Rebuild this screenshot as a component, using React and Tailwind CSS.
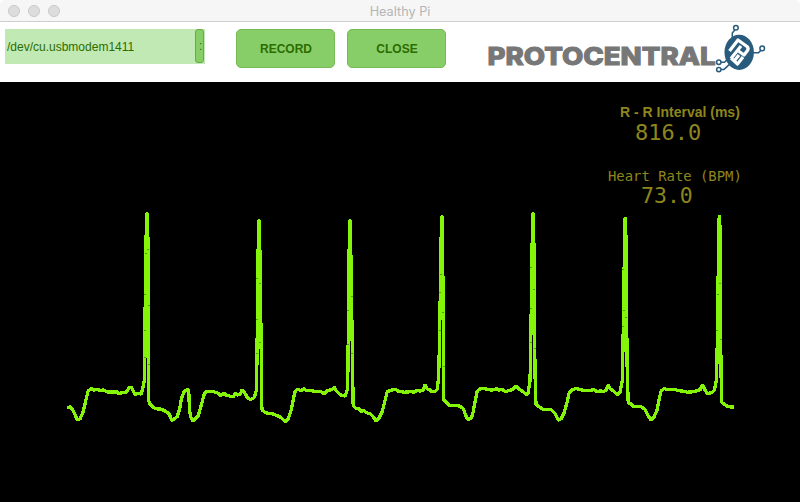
const TRACE = [
  // beat 1
  "67,407 70,406 73,410 77,419 80,418 83,411 85.5,400 88,390 91.5,388 94,389.5 97,388.5 100,390 103,389 107,391.3 117,391.3 119,393.5 122,391.5 125,392 127,390.5 129,386.5 131,386.5 133,390 135,394 138,392.5 141,393.5 142.5,388 144,380 144.6,370 145,300 146.3,212.5 147.2,212.5 148.5,280 148.6,400 150,404 155,408 161,408.5 166,411 169,413 171.5,420 174,418 177,416 179.5,408 181.5,397 184,391 186,389.5 188.5,389 189.3,410 190.5,416 193,420.5 198,415 200,408 202,401 204,393.5 206,390.5",
  // beat 2
  "209,391 213,391 217,392 220,394.5 222,394 224,392 226,394.5 230,395.5 233,396 235,392.5 237,394.5 240,393.5 242,389 244,391 247,396.5 250,399 254,397 256,390 256.6,370 257.5,290 258.3,219.5 259.2,219.5 260.3,290 261.2,370 261.7,409 265,412 272,413 277,415 281,417 285,421 288,418 291,409 293,399 295,390.5 297,388.5 301,389.8 304,388 306,390 311,389.5 314,391 317,391 321,391 324,393.5 326,390.5 328,390 332,388.5 334,386.5 336,390",
  // beat 3
  "340,394 345,395.5 347,389 347.7,370 348.5,290 349.3,219.5 350.1,219.5 351.4,300 352.4,370 353,405 356,408 359,408 361,411 363,409 366,412 370,413 373,416 376,420.5 379,417 382,411 385,399 387,391 391,389.5 395,388.5 398,390.5 404,391.5 411,391 414,391.5 417,389.5 420,390.5 423,389.5 425,383.5 427,388.5 429,388.5 431,391 434,391 437,389 438.5,375",
  // beat 4
  "439.5,330 441.3,215.5 442.1,215.5 443,310 443.5,399 446,401.5 449,404.5 455,404.5 460,405.5 463,408 465,413 467,418.5 471,418 473,411 475,400 477,390.5 480,388 484,388 489,389 492,389.5 496,388 499,389.5 502,388.5 505,391 508,390 512,389 516,385.5 519,388.5 523,391 526,394 528,392 529.8,380",
  // beat 5
  "530.3,360 531.3,290 532.4,212.5 533.2,212.5 534.4,290 534.7,370 535.8,404 539,406 543,409 547,409 551,409 555,413 558,419.5 561,418 564,412 567,401 569,392 572,389 576,387.8 580,389 583,389.5 591,389.5 594,389 597,391 600,390 603,391 606,389.5 608,384 610,388 613,390 617,394 620,391 622,380 622.7,350",
  // beat 6
  "623.6,290 624.7,217.5 625.5,217.5 626.4,310 627,370 628,402 631,403.5 633,406 641,406 645,409 648,415 651,419.5 654,416 657,409 659,398 661,390 664,388 668,389 674,388.5 678,390 683,390.5 687,391.5 694,391 698,389.5 700,389 702.5,384 704,388 707,393 711,392 714,390 716,380 716.8,360",
  // beat 7
  "717.7,290 719,215.5 719.6,215.5 720.3,310 720.8,370 721.5,402 725,404 728,406 734,406.5",
].join(" ");

const SEAMS = [
  [144, 330], [148, 305], [144, 294], [145, 253], [147, 249], [144, 357],
  [148, 364], [256, 278], [259, 283], [256, 319], [259, 342], [256, 353],
  [347, 310], [351, 296], [347, 344], [351, 353], [440, 274], [442, 312],
  [439, 292], [439, 330], [443, 366], [530, 267], [533, 289], [530, 308],
  [530, 342], [534, 348], [622, 269], [623, 310], [625, 317], [622, 326],
  [717, 294], [719, 283], [716, 330], [720, 339],
];

function TitleBar() {
  return (
    <header className="grid h-[22px] grid-cols-[1fr_auto_1fr] items-center border-b border-[#cfcfcf] bg-[#f6f6f6]">
      <div className="flex gap-2 pl-2">
        <span className="size-3 rounded-full border border-[#c8c8c8] bg-[#dddddd]" />
        <span className="size-3 rounded-full border border-[#c8c8c8] bg-[#dddddd]" />
        <span className="size-3 rounded-full border border-[#c8c8c8] bg-[#dddddd]" />
      </div>
      <h1 className="pt-[3px] font-['Inter',sans-serif] text-[12.7px] leading-none text-[#b5b5b5]">Healthy Pi</h1>
      <div />
    </header>
  );
}

function ToolButton({ children }) {
  return (
    <button className="h-[39px] w-[99px] rounded-[5px] border border-[#77b954] bg-[#88ce68] pl-px text-xs font-bold text-[#2c6c00]">
      {children}
    </button>
  );
}

function Logo() {
  return (
    <svg className="h-[60px] w-[290px]" viewBox="480 22 290 60" aria-label="Protocentral">
      <text
        x="487.5"
        y="65.2"
        fill="#777777"
        stroke="#777777"
        strokeWidth="1"
        fontFamily="Inter, sans-serif"
        fontWeight="800"
        fontSize="24"
        textLength="228"
        lengthAdjust="spacingAndGlyphs"
      >
        PROTOCENTRAL
      </text>
      <g fill="none" stroke="#285b7c" strokeWidth="1.5">
        <path d="M732.3 38v-5l2.5-3M753 52.7h5.5l2.3-2.3M721 62.3h3.5l4-4M721 69.4h3l5.5-5" />
        <circle cx="735.9" cy="27.8" r="2.3" />
        <circle cx="762.2" cy="48.4" r="2.3" />
        <circle cx="718.8" cy="62.3" r="2.2" />
        <circle cx="718.8" cy="69.6" r="2.2" />
      </g>
      <ellipse cx="739.2" cy="52.3" rx="14.7" ry="17.6" fill="#285b7c" />
      <g fill="none" stroke="#ffffff" strokeWidth="3.2" strokeLinejoin="round">
        <path d="M729.5 51L738 40L747 46.5Q749 48.5 747.5 50.5L744 55L738.5 51" />
        <path d="M741 46L731 58.5M731 58L737.5 64L743 57M734.5 60.5L739 55" />
      </g>
    </svg>
  );
}

function Toolbar() {
  return (
    <div className="flex h-[60px] items-start bg-white pl-[5px]">
      <div className="mt-[7px] flex h-[35px] w-[200px] bg-[#c1e9b3] text-xs text-[#2c6c00]">
        <span className="flex-1 pl-[2px] leading-[37px]">/dev/cu.usbmodem1411</span>
        <span className="mr-px h-[34px] w-[9px] rounded-[3px] border border-[#68aa48] bg-[#88ce68] pl-[3px] leading-[32px]">:</span>
      </div>
      <div className="mt-[7px] ml-[31px] flex gap-3">
        <ToolButton>RECORD</ToolButton>
        <ToolButton>CLOSE</ToolButton>
      </div>
      <div className="ml-[34px]">
        <Logo />
      </div>
    </div>
  );
}

function Readings() {
  return (
    <div className="absolute top-[22px] left-[600px] flex w-[150px] flex-col text-[#8d861c]">
      <div className="pl-5 text-[14px] leading-4 font-bold whitespace-nowrap">R - R Interval (ms)</div>
      <div className="mt-px pl-[35px] font-['DejaVu_Sans_Mono',monospace] text-[22px] leading-6">816.0</div>
      <div className="mt-[23px] pl-2 font-['DejaVu_Sans_Mono',monospace] text-[13.9px] leading-4 whitespace-nowrap">Heart Rate (BPM)</div>
      <div className="pl-[41px] font-['DejaVu_Sans_Mono',monospace] text-[21.5px] leading-6">73.0</div>
    </div>
  );
}

function Monitor() {
  return (
    <main className="relative flex-1 bg-black">
      <svg className="block h-[420px] w-[800px]" viewBox="0 82 800 420">
        <polyline
          points={TRACE}
          transform="translate(0.2 0.7)"
          fill="none"
          stroke="#84f408"
          strokeWidth="3.3"
          strokeLinejoin="bevel"
          shapeRendering="crispEdges"
        />
        {SEAMS.map(([x, y]) => (
          <rect key={`${x}-${y}`} x={x} y={y} width="2" height="1" fill="#4fa000" />
        ))}
      </svg>
      <Readings />
    </main>
  );
}

export default function App() {
  return (
    <div className="bg-white">
      <div className="flex h-[502px] w-[800px] flex-col overflow-hidden rounded-t-[5px] font-['Liberation_Sans',Arial,sans-serif]">
        <TitleBar />
        <Toolbar />
        <Monitor />
      </div>
    </div>
  );
}
